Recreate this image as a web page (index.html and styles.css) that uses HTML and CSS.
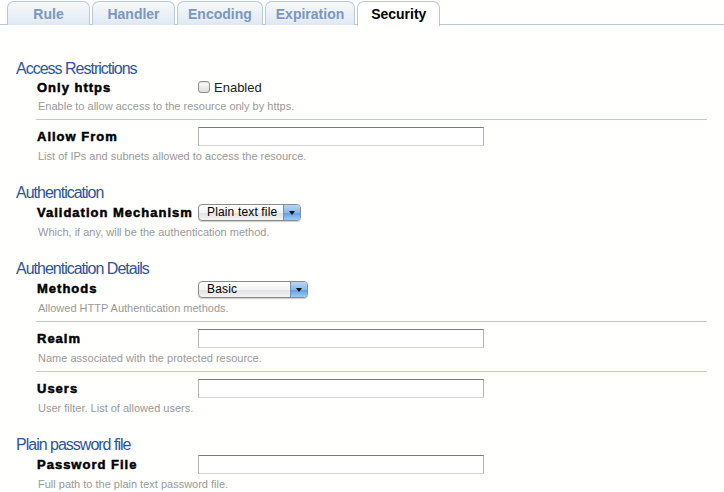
FILE: index.html
```html
<!DOCTYPE html>
<html>
<head>
<meta charset="utf-8">
<link rel="stylesheet" href="styles.css">
</head>
<body>
<div class="tabs">
  <div class="tab">Rule</div>
  <div class="tab">Handler</div>
  <div class="tab">Encoding</div>
  <div class="tab">Expiration</div>
  <div class="tab active">Security</div>
</div>

<div class="panel">
  <div class="section">
    <h2 class="section-title">Access Restrictions</h2>
    <div class="entries">
      <div class="entry first">
        <div class="row short">
          <span class="label">Only https</span>
          <label class="check"><span class="box"></span>Enabled</label>
        </div>
        <div class="desc">Enable to allow access to the resource only by https.</div>
      </div>
      <div class="entry">
        <div class="row">
          <span class="label">Allow From</span>
          <input class="text" type="text">
        </div>
        <div class="desc">List of IPs and subnets allowed to access the resource.</div>
      </div>
    </div>
  </div>

  <div class="section">
    <h2 class="section-title">Authentication</h2>
    <div class="entries">
      <div class="entry first">
        <div class="row">
          <span class="label">Validation Mechanism</span>
          <span class="select sel-plain"><span class="sel-text">Plain text file</span><span class="sel-btn"></span></span>
        </div>
        <div class="desc">Which, if any, will be the authentication method.</div>
      </div>
    </div>
  </div>

  <div class="section">
    <h2 class="section-title">Authentication Details</h2>
    <div class="entries">
      <div class="entry first">
        <div class="row">
          <span class="label">Methods</span>
          <span class="select sel-basic"><span class="sel-text">Basic</span><span class="sel-btn"></span></span>
        </div>
        <div class="desc">Allowed HTTP Authentication methods.</div>
      </div>
      <div class="entry">
        <div class="row">
          <span class="label">Realm</span>
          <input class="text" type="text">
        </div>
        <div class="desc">Name associated with the protected resource.</div>
      </div>
      <div class="entry">
        <div class="row">
          <span class="label">Users</span>
          <input class="text" type="text">
        </div>
        <div class="desc">User filter. List of allowed users.</div>
      </div>
    </div>
  </div>

  <div class="section">
    <h2 class="section-title">Plain password file</h2>
    <div class="entries">
      <div class="entry first">
        <div class="row">
          <span class="label">Password File</span>
          <input class="text" type="text">
        </div>
        <div class="desc">Full path to the plain text password file.</div>
      </div>
    </div>
  </div>
</div>
</body>
</html>
```

FILE: styles.css
```css
* { box-sizing: border-box; }
html, body { margin: 0; padding: 0; }
body {
  background: #fffffe;
  font-family: "Liberation Sans", Arial, sans-serif;
  width: 724px;
  height: 492px;
  overflow: hidden;
}

.tabs {
  display: flex;
  gap: 2px;
  padding: 1px 0 0 7px;
  height: 25px;
  border-bottom: 1px solid #b9c9dc;
}
.tab {
  min-width: 83px;
  height: 24px;
  padding: 4px 10px 0;
  text-align: center;
  font-size: 14px;
  font-weight: bold;
  color: #7b97bf;
  border: 1px solid #b9c9dc;
  border-bottom: none;
  border-radius: 7px 7px 0 0;
  background: linear-gradient(#f7f9fc, #dfe8f2);
}
.tab.active {
  height: 25px;
  background: #fff;
  color: #000;
  margin-bottom: -1px;
}

.panel {
  padding: 35px 0 0 16px;
}
.section { margin-bottom: 15px; }
.section-title {
  margin: 0;
  font-size: 16px;
  line-height: 18px;
  font-weight: normal;
  letter-spacing: -1px;
  color: #2e52a0;
}
.entries {
  margin-left: 20px;
  width: 671px;
}
.entry {
  padding: 6px 0 5px 1px;
  border-top: 1px solid #bccadb;
}
.entry.first {
  padding-top: 0;
  border-top: none;
}
.row {
  display: flex;
  align-items: center;
  height: 20px;
}
.row.short { height: 18px; }
.label {
  width: 161px;
  flex: none;
  font-size: 13px;
  font-weight: bold;
  letter-spacing: 1px;
  color: #000;
  -webkit-text-stroke: 0.5px #000;
}
.desc {
  margin-top: 2px;
  padding-left: 1px;
  font-size: 11px;
  line-height: 16px;
  color: #999;
}

.text {
  width: 286px;
  height: 19px;
  margin: 0;
  padding: 0;
  background: #fff;
  border: 1px solid #b4b4b4;
  border-top-color: #7a7a7a;
  border-bottom-color: #d4d4d4;
}

.check {
  display: flex;
  align-items: center;
  font-size: 13px;
  color: #222;
}
.box {
  width: 12px;
  height: 12px;
  margin-right: 4px;
  border: 1px solid #8d8d8d;
  border-radius: 3px;
  background: linear-gradient(#fdfdfd, #dedede);
  box-shadow: inset 0 1px 1px rgba(0,0,0,0.1);
}

.select {
  display: flex;
  align-items: center;
  height: 17px;
  border: 1px solid #8a8a8a;
  border-radius: 4px;
  background: linear-gradient(#ffffff 0%, #f3f3f3 50%, #e1e1e1 51%, #f4f4f4 100%);
  box-shadow: 0 1px 1px rgba(0,0,0,0.2);
  overflow: hidden;
  font-size: 12px;
  color: #000;
}
.sel-plain { width: 103px; }
.sel-basic { width: 110px; margin-top: 2px; }
.sel-text {
  flex: 1;
  padding-left: 8px;
  letter-spacing: 0.15px;
}
.sel-btn {
  position: relative;
  width: 17px;
  height: 100%;
  border-left: 1px solid #6d8fb8;
  background: linear-gradient(#b9d6f5 0%, #8ab8ea 50%, #5f9be0 51%, #9ccaf5 100%);
}
.sel-btn::after {
  content: "";
  position: absolute;
  left: 5px;
  top: 6px;
  border-left: 3px solid transparent;
  border-right: 3px solid transparent;
  border-top: 4px solid #111;
}
```
